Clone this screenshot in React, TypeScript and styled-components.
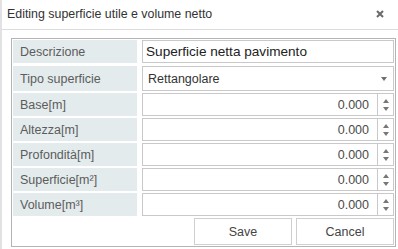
import styled, { createGlobalStyle } from "styled-components";

const GlobalStyle = createGlobalStyle`
  html, body {
    margin: 0;
    padding: 0;
    background: #ffffff;
  }
  body {
    font-family: "Liberation Sans", Arial, sans-serif;
  }
`;

const fields = [
  { label: "Base[m]", value: "0.000" },
  { label: "Altezza[m]", value: "0.000" },
  { label: "Profondità[m]", value: "0.000" },
  { label: "Superficie[m²]", value: "0.000" },
  { label: "Volume[m³]", value: "0.000" },
];

const App = () => {
  return (
    <>
      <GlobalStyle />
      <Dialog>
        <TitleBar>
          <Title>Editing superficie utile e volume netto</Title>
          <CloseButton>
            <svg width="8" height="8" viewBox="0 0 8 8">
              <path d="M1 1L7 7M7 1L1 7" stroke="#6a6a6a" strokeWidth="2" />
            </svg>
          </CloseButton>
        </TitleBar>

        <Panel>
          <Form>
            <Label>Descrizione</Label>
            <TextBox>Superficie netta pavimento</TextBox>

            <Label $tall>Tipo superficie</Label>
            <Select>
              <span>Rettangolare</span>
              <Caret />
            </Select>

            {fields.map((f) => (
              <Row key={f.label}>
                <Label>{f.label}</Label>
                <NumberField>
                  <NumberValue>{f.value}</NumberValue>
                  <Spinner>
                    <ArrowUp />
                    <ArrowDown />
                  </Spinner>
                </NumberField>
              </Row>
            ))}
          </Form>

          <Footer>
            <Button>Save</Button>
            <Button>Cancel</Button>
          </Footer>
        </Panel>
      </Dialog>
    </>
  );
};

const Dialog = styled.div`
  width: 398px;
  height: 249px;
  box-sizing: border-box;
  border-left: 2px solid #e2e2e2;
  background: #fff;
  overflow: hidden;
`;

const TitleBar = styled.div`
  height: 30px;
  box-sizing: border-box;
  border-bottom: 1px solid #dcdcdc;
  margin-left: -2px;
  padding: 0 14px 0 7px;
  display: flex;
  align-items: center;
  justify-content: space-between;
`;

const Title = styled.div`
  font-size: 12.4px;
  color: #333;
  padding-bottom: 1px;
`;

const CloseButton = styled.div`
  display: flex;
  align-items: center;
  margin-top: -2px;
`;

const Panel = styled.div`
  margin: 8px 2px 0 9px;
  border: 1px solid #b4b4b4;
  padding: 1px 1px 1px 1px;
  display: flex;
  flex-direction: column;
`;

const Form = styled.div`
  display: grid;
  grid-template-columns: 124px 1fr;
  column-gap: 5px;
  grid-template-rows: 23px 26px repeat(5, 23px);
  row-gap: 2px;
`;

const Row = styled.div`
  display: contents;
`;

const Label = styled.div<{ $tall?: boolean }>`
  background: #e3ebec;
  color: #5c5c5c;
  font-size: 12.5px;
  padding-left: 7px;
  display: flex;
  align-items: center;
  margin-top: ${(p) => (p.$tall ? "1px" : "0")};
`;

const Box = styled.div`
  box-sizing: border-box;
  border: 1px solid #c9c9c9;
  background: #fff;
  display: flex;
  align-items: center;
`;

const TextBox = styled(Box)`
  font-size: 13.6px;
  color: #222;
  padding-left: 3px;
`;

const Select = styled(Box)`
  margin-top: 1px;
  justify-content: space-between;
  font-size: 12.5px;
  color: #333;
  padding: 0 6px 0 5px;
`;

const Caret = styled.span`
  width: 0;
  height: 0;
  border-left: 3.5px solid transparent;
  border-right: 3.5px solid transparent;
  border-top: 4px solid #6e6e6e;
`;

const NumberField = styled.div`
  display: flex;
`;

const NumberValue = styled(Box)`
  flex: 1;
  justify-content: flex-end;
  padding-right: 8px;
  font-size: 12.5px;
  color: #4a4a4a;
`;

const Spinner = styled(Box)`
  width: 17px;
  margin-left: -1px;
  flex-direction: column;
  justify-content: center;
  gap: 4px;
`;

const ArrowUp = styled.span`
  width: 0;
  height: 0;
  border-left: 3.5px solid transparent;
  border-right: 3.5px solid transparent;
  border-bottom: 4px solid #777;
`;

const ArrowDown = styled.span`
  width: 0;
  height: 0;
  border-left: 3.5px solid transparent;
  border-right: 3.5px solid transparent;
  border-top: 4px solid #777;
`;

const Footer = styled.div`
  display: flex;
  justify-content: flex-end;
  gap: 4px;
  margin-top: 2px;
`;

const Button = styled.div`
  width: 98px;
  height: 27px;
  box-sizing: border-box;
  border: 1px solid #cfcfcf;
  background: #fff;
  font-size: 12.5px;
  color: #444;
  display: flex;
  align-items: center;
  justify-content: center;
`;

export default App;
